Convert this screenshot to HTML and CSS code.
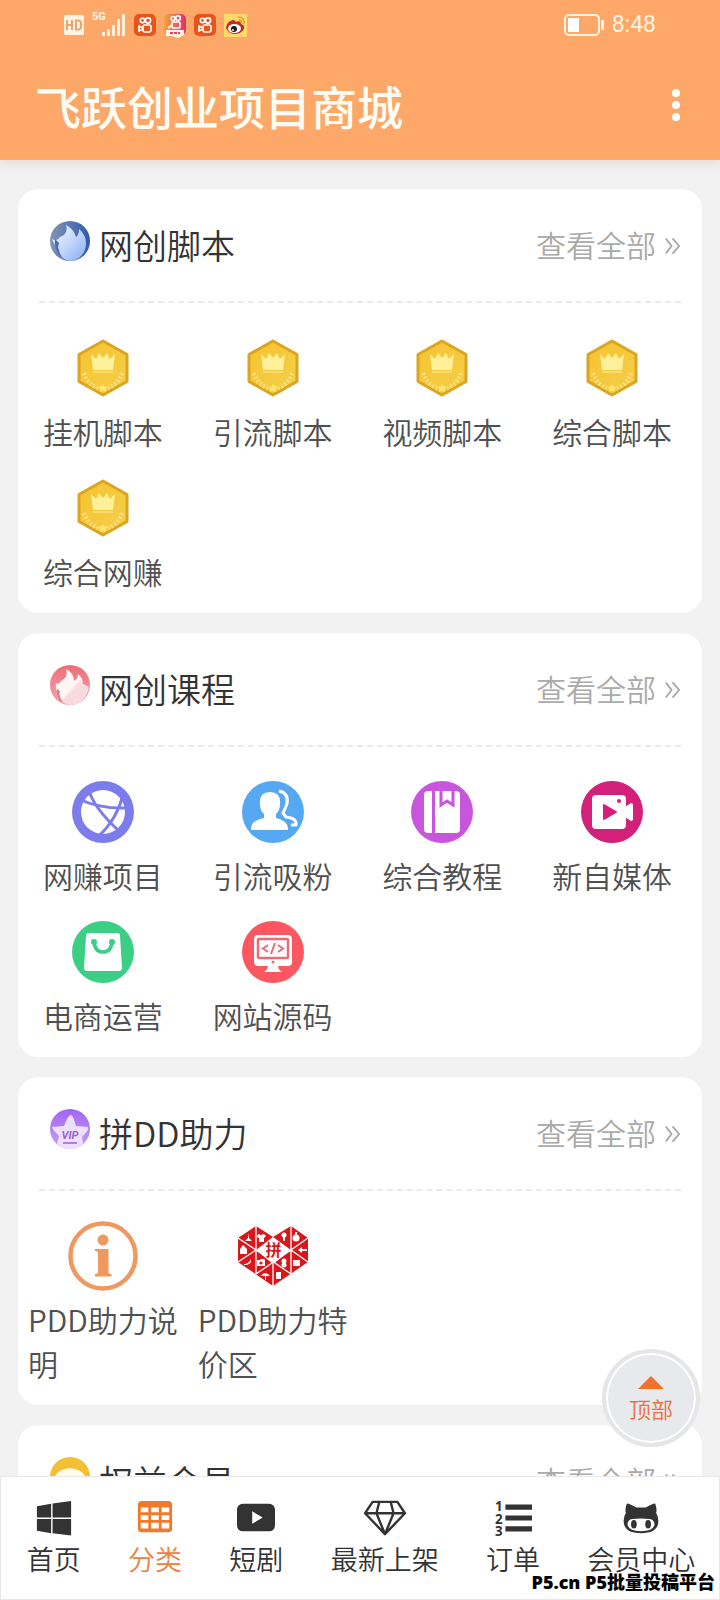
FILE: index.html
```html
<!DOCTYPE html>
<html lang="zh-CN">
<head>
<meta charset="utf-8">
<meta name="viewport" content="width=device-width, initial-scale=1">
<title>飞跃创业项目商城</title>
<link rel="stylesheet" href="styles.css">
</head>
<body>
<svg class="defs" aria-hidden="true">
  <defs>
    <linearGradient id="gold" x1="0" y1="0" x2="1" y2="1"><stop offset="0" stop-color="#f7c331"/><stop offset="1" stop-color="#f3cf4a"/></linearGradient>
    <linearGradient id="blue" x1="0" y1="0" x2="1" y2="0"><stop offset="0" stop-color="#8493b8"/><stop offset="1" stop-color="#2f5aa8"/></linearGradient>
    <linearGradient id="ice" x1="0" y1="0" x2="1" y2="1"><stop offset="0" stop-color="#f4f8ff"/><stop offset=".5" stop-color="#c3d7fb"/><stop offset="1" stop-color="#86adf4"/></linearGradient>
    <linearGradient id="rose" x1="0" y1="0" x2="0" y2="1"><stop offset="0" stop-color="#ee6d78"/><stop offset="1" stop-color="#f4a7ae"/></linearGradient>
    <linearGradient id="blush" x1="0" y1="0" x2="1" y2="1"><stop offset=".5" stop-color="#fff6f6"/><stop offset=".55" stop-color="#f7dbde"/></linearGradient>
    <linearGradient id="violet" x1="0" y1="0" x2="0" y2="1"><stop offset="0" stop-color="#a264f2"/><stop offset="1" stop-color="#c4a4f2"/></linearGradient>
    <linearGradient id="app" x1="0" y1="0" x2="1" y2="0"><stop offset="0" stop-color="#f5a33c"/><stop offset="1" stop-color="#e22e6b"/></linearGradient>
  </defs>
  <symbol id="coin" viewBox="0 0 70 70">
    <path d="M35 8 59 21.500V48.500L35 62 11 48.500V21.500Z" fill="url(#gold)" stroke="#dba51f" stroke-width="3" stroke-linejoin="round"/>
    <path d="M23 21l5 5 3-6 4 5 4-5 3 6 5-5-2 16H25Z" fill="#fff09a"/>
    <path d="M25 39h20" stroke="#fbe27b" stroke-width="1.500"/>
    <path d="M16 40q4 12 14 15M54 40q-4 12-14 15" fill="none" stroke="#f9df85" stroke-width="4" stroke-dasharray="2 2"/>
    <path d="M35 51l1.500 2.500 3 .5-2 2 .5 3-3-1.500-3 1.500.5-3-2-2 3-.5Z" fill="#ffe878"/>
  </symbol>
  <symbol id="kuai" viewBox="0 0 22 22">
    <rect width="22" height="22" rx="5" fill="#e8541c"/>
    <g fill="none" stroke="#fff" stroke-width="1.600"><circle cx="8.500" cy="6.500" r="2.200"/><circle cx="14" cy="6.500" r="2.600"/><rect x="9" y="11" width="8" height="7" rx="2"/><path d="M9 14l-4-2v5l4-2"/></g>
  </symbol>
  <symbol id="more" viewBox="0 0 18 18"><path d="M2 1l6 8-6 8M9 1l7 8-7 8" fill="none" stroke="currentColor" stroke-width="2"/></symbol>
</svg>

<header class="top">
  <div class="status">
    <svg width="20" height="20" viewBox="0 0 20 20" aria-hidden="true"><rect width="20" height="20" rx="2" fill="#fff4e2"/><path d="M3 5v10M3 10h5M8 5v10M12 5.500v9h2q3 0 3-3v-3q0-3-3-3Z" fill="none" stroke="#eda56e" stroke-width="2"/></svg>
    <span class="net">5G</span>
    <svg class="signal" width="24" height="22" viewBox="0 0 24 22" aria-hidden="true"><path d="M1.500 22v-4M6.500 22v-6.500M11.500 22v-11M16.500 22V5M21.500 22V0" stroke="#fff0dc" stroke-width="3"/></svg>
    <svg width="22" height="22" aria-hidden="true"><use href="#kuai"/></svg>
    <svg width="22" height="26" viewBox="0 0 22 26" aria-hidden="true"><rect y="2" width="22" height="21" rx="5" fill="url(#app)"/><g fill="none" stroke="#fff" stroke-width="1.600"><circle cx="9" cy="6.500" r="2"/><circle cx="14" cy="6" r="2.300"/><rect x="8" y="10" width="8" height="6" rx="1"/><path d="M8 13l-4 3"/></g><path d="M2 18h18v5l-6 3-6-2-6 0Z" fill="#fff4e8"/><path d="M6 21h10" stroke="#d6475b" stroke-width="2" stroke-dasharray="3 1"/></svg>
    <svg width="22" height="22" aria-hidden="true"><use href="#kuai"/></svg>
    <svg width="23" height="23" viewBox="0 0 23 23" aria-hidden="true"><rect width="23" height="23" fill="#fcd968"/><path d="M2 14q1-7 7-8 3 0 2 2 6-2 6 2 4 1 3 5-3 5-9 5t-9-6Z" fill="#c22a25"/><ellipse cx="10.500" cy="14.500" rx="6.500" ry="4.500" fill="#fff"/><circle cx="10" cy="15" r="3" fill="#20171a"/><circle cx="9" cy="16" r="1" fill="#fff"/><path d="M14 3q7 0 6 7M15 6q3 0 2.500 3" fill="none" stroke="#ec9c2c" stroke-width="1.500"/></svg>
    <svg class="battery" width="40" height="22" viewBox="0 0 40 22" aria-hidden="true"><rect x="1" y="1" width="34" height="20" rx="4" fill="none" stroke="#fff4e2" stroke-width="2"/><rect x="4" y="4" width="11" height="14" fill="#fff"/><path d="M38.500 6v10" stroke="#fff4e2" stroke-width="3"/></svg>
    <time class="time">8:48</time>
  </div>
  <div class="titlebar">
    <h1>飞跃创业项目商城</h1>
    <button class="menu" aria-label="更多"><svg width="8" height="32" viewBox="0 0 8 32"><g fill="#fff"><circle cx="4" cy="4" r="4"/><circle cx="4" cy="16" r="4"/><circle cx="4" cy="28" r="4"/></g></svg></button>
  </div>
</header>

<main class="content">
  <section class="card">
    <div class="card-head">
      <svg class="badge" viewBox="0 0 40 40" aria-hidden="true"><circle cx="20" cy="20" r="20" fill="url(#blue)"/><path d="M14 14q4-4 2-10 8 4 10 12 3-2 3-8 7 6 7 14Q36 36 22 40 10 40 9 28q-4-2-7-10 5 3 8-2 2-1 4-2Z" fill="url(#ice)"/><path d="M5 18q-1 8 4 16l3 2q-6-7-3-14Z" fill="#4a6da8"/></svg>
      <h2>网创脚本</h2>
      <a class="all" href="#">查看全部<svg aria-hidden="true"><use href="#more"/></svg></a>
    </div>
    <div class="grid">
      <a class="cell" href="#"><svg aria-hidden="true"><use href="#coin"/></svg><span>挂机脚本</span></a>
      <a class="cell" href="#"><svg aria-hidden="true"><use href="#coin"/></svg><span>引流脚本</span></a>
      <a class="cell" href="#"><svg aria-hidden="true"><use href="#coin"/></svg><span>视频脚本</span></a>
      <a class="cell" href="#"><svg aria-hidden="true"><use href="#coin"/></svg><span>综合脚本</span></a>
      <a class="cell" href="#"><svg aria-hidden="true"><use href="#coin"/></svg><span>综合网赚</span></a>
    </div>
  </section>

  <section class="card">
    <div class="card-head">
      <svg class="badge" viewBox="0 0 40 40" aria-hidden="true"><circle cx="20" cy="20" r="20" fill="url(#rose)"/><path d="M14 14q4-4 2-10 8 4 8 12 4-2 4-7 5 4 5 10 3 1 6 3Q36 38 22 40 10 40 9 28q-4-2-3-10 3 2 5-2Z" fill="url(#blush)"/><path d="M7 24q-1 6 3 12l3 1q-5-6-3-11Z" fill="#dc7f8a"/></svg>
      <h2>网创课程</h2>
      <a class="all" href="#">查看全部<svg aria-hidden="true"><use href="#more"/></svg></a>
    </div>
    <div class="grid">
      <a class="cell" href="#"><svg viewBox="0 0 70 70" aria-hidden="true"><circle cx="35" cy="35" r="31" fill="#7d7cec"/><circle cx="35" cy="35" r="22" fill="#fff"/><path d="M21 13q4 17 30 41M55 18Q49 42 30 60M11 22q20 10 49 9" fill="none" stroke="#7d7cec" stroke-width="3"/></svg><span>网赚项目</span></a>
      <a class="cell" href="#"><svg viewBox="0 0 70 70" aria-hidden="true"><circle cx="35" cy="35" r="31" fill="#57a8f3"/><path d="M32 15q11 0 10 12 0 7-4 10v4q13 3 12 12H13q-1-9 13-12v-4q-4-3-4-10-1-12 10-12Z" fill="#fff"/><path d="M41 14q10 2 8 13-2 5-4 9l3 4q11 1 10 8h-5" fill="none" stroke="#fff" stroke-width="3" stroke-linejoin="round"/></svg><span>引流吸粉</span></a>
      <a class="cell" href="#"><svg viewBox="0 0 70 70" aria-hidden="true"><circle cx="35" cy="35" r="31" fill="#c755dd"/><rect x="17" y="14" width="36" height="42" rx="4" fill="#fff"/><path d="M26.500 14v42" stroke="#c755dd" stroke-width="3"/><path d="M34 13v15l6-4 6 4V13" fill="none" stroke="#c755dd" stroke-width="3"/></svg><span>综合教程</span></a>
      <a class="cell" href="#"><svg viewBox="0 0 70 70" aria-hidden="true"><circle cx="35" cy="35" r="31" fill="#d2207b"/><rect x="15" y="18" width="34" height="34" rx="4" fill="#fff"/><path d="M48 30l6-4q2 0 2 2v14q0 2-2 2l-6-4Z" fill="#fff"/><path d="M27 28v14l12-7Z" fill="#d2207b" stroke="#d2207b" stroke-width="2" stroke-linejoin="round"/><circle cx="42" cy="24" r="2" fill="#d2207b"/></svg><span>新自媒体</span></a>
      <a class="cell" href="#"><svg viewBox="0 0 70 70" aria-hidden="true"><circle cx="35" cy="35" r="31" fill="#3dce86"/><path d="M21 16h28q3 0 3 3l2 32q0 3-3 3H19q-3 0-3-3l2-32q0-3 3-3Z" fill="#fff"/><path d="M26 25q1 10 9 10t9-10" fill="none" stroke="#3dce86" stroke-width="3.500"/><circle cx="26" cy="25" r="3" fill="#3dce86"/><circle cx="44" cy="25" r="3" fill="#3dce86"/></svg><span>电商运营</span></a>
      <a class="cell" href="#"><svg viewBox="0 0 70 70" aria-hidden="true"><circle cx="35" cy="35" r="31" fill="#fa5761"/><rect x="16" y="18" width="38" height="31" rx="4" fill="#fff"/><path d="M30 48h10q0 5 4 7H26q4-2 4-7Z" fill="#fff"/><rect x="20" y="22" width="30" height="19" rx="1" fill="none" stroke="#ef6a73" stroke-width="2.500"/><path d="M30 28l-5 3.500 5 3.500M40 28l5 3.500-5 3.500M37 26l-4 11" fill="none" stroke="#ef6a73" stroke-width="2"/><circle cx="35" cy="45" r="1.500" fill="#ef6a73"/></svg><span>网站源码</span></a>
    </div>
  </section>

  <section class="card">
    <div class="card-head">
      <svg class="badge" viewBox="0 0 40 40" aria-hidden="true"><circle cx="20" cy="20" r="20" fill="url(#violet)"/><path d="M21 6q2 0 5 11l12 1q2 2-6 10l1 7q-5 5-13 5t-13-5l2-8q-8-8-7-9l12-1q4-11 7-11Z" fill="#efdfff"/><path d="M13 34h14" stroke="#9a62cf" stroke-width="1.500"/><text x="20" y="30" class="vip">VIP</text></svg>
      <h2>拼DD助力</h2>
      <a class="all" href="#">查看全部<svg aria-hidden="true"><use href="#more"/></svg></a>
    </div>
    <div class="grid">
      <a class="cell" href="#"><svg viewBox="0 0 70 70" aria-hidden="true"><circle cx="35" cy="35" r="32.500" fill="none" stroke="#ef985f" stroke-width="4.500"/><circle cx="35" cy="19" r="5.500" fill="#ef985f"/><path d="M27 28h13.500v23q0 2 3 2v2.500H27V53q3 0 3-2V32q0-2-3-2Z" fill="#ef985f"/></svg><span>PDD助力说明</span></a>
      <a class="cell" href="#"><svg viewBox="0 0 70 70" aria-hidden="true">
        <path d="M18 5 35 16 53 5 70 17V41L35 65 0 41V17Z" fill="#d8161c"/>
        <path d="M18 5v48M53 5v48M0 17l18 12L0 41M70 17 53 29l17 12M18 29l35 24M53 29 18 53M35 43v22" fill="none" stroke="#fff" stroke-width="1.300"/>
        <path d="M35 16 53 29 35 43 18 29Z" fill="#fff"/>
        <g fill="#fff"><path d="M11 12v5l3 3H7l3-3Z"/><path d="M20 13l3 1 3-1 2 2-2 2v4h-5v-4l-2-1Z"/><circle cx="46" cy="14" r="2.500"/><path d="M45 16h2v4h-2Z"/><circle cx="58" cy="17" r="3.500"/><path d="M57 11h2v3h-2Z"/><path d="M2 28l3-4 4 4v5H2Z"/><path d="M60 29l4-3v2h5v2h-5v2Z"/><path d="M6 43q5 0 7-5 1 6-7 6Z"/><path d="M19 39h3l1-1h3l1 1v6h-8Z"/><circle cx="46" cy="40" r="2.500"/><circle cx="46" cy="44" r="2.500"/><path d="M55 39h7v6h-7Z"/><path d="M23 55q4-6 9 0Z"/><path d="M27 54h1v5h-1Z"/><path d="M38 51h5v7h-5Z"/></g>
        <circle cx="23" cy="42" r="1.600" fill="#d8161c"/><text x="35.500" y="35" class="pin">拼</text></svg><span>PDD助力特价区</span></a>
    </div>
  </section>

  <section class="card">
    <div class="card-head">
      <svg class="badge" viewBox="0 0 40 40" aria-hidden="true"><circle cx="20" cy="20" r="20" fill="#f3bf35"/><path d="M5 19q4-7 15-8 11 1 15 8-4 17-15 19Q9 36 5 19Z" fill="#fffbe8"/></svg>
      <h2>权益会员</h2>
      <a class="all" href="#">查看全部<svg aria-hidden="true"><use href="#more"/></svg></a>
    </div>
  </section>
</main>

<button class="to-top"><svg width="26" height="13" viewBox="0 0 26 13" aria-hidden="true"><path d="M13 0 26 13H0Z" fill="#f0722c"/></svg><span>顶部</span></button>

<nav class="tabs">
  <a href="#"><svg viewBox="0 0 40 40" aria-hidden="true"><path d="M2 7.500 17 5v14.500H2ZM18.500 4.700 38 2v17.500H18.500ZM2 21h15V36L2 33.500ZM18.500 21H38V38.500l-19.500-2.500Z" fill="#333"/></svg><span>首页</span></a>
  <a href="#" class="on" aria-current="page"><svg viewBox="0 0 40 40" aria-hidden="true"><rect x="2" y="2" width="36" height="33" rx="4" fill="#f07a2c"/><path d="M5 9h8v5H5ZM16 9h8v5h-8ZM27 9h8v5h-8ZM5 17h8v5H5ZM16 17h8v5h-8ZM27 17h8v5h-8ZM5 25h8v6H5ZM16 25h8v6h-8ZM27 25h8v6h-8Z" fill="#fff"/></svg><span>分类</span></a>
  <a href="#"><svg viewBox="0 0 40 40" aria-hidden="true"><rect x="0" y="5" width="40" height="29" rx="6" fill="#333"/><path d="M16 13v13l11-6.500Z" fill="#fff"/></svg><span>短剧</span></a>
  <a href="#"><svg class="wide" viewBox="0 0 46 40" aria-hidden="true"><path d="M10 3h26l8 12-21 22L2 15ZM2 15h42M17 3l-3 12 9 22 9-22-3-12" fill="none" stroke="#333" stroke-width="2.500" stroke-linejoin="round"/></svg><span>最新上架</span></a>
  <a href="#"><svg viewBox="0 0 40 40" aria-hidden="true"><path d="M12 8.500h28M12 20h28M12 31.500h28" stroke="#333" stroke-width="5.500"/><g class="num"><text x="5" y="13">1</text><text x="5" y="26">2</text><text x="5" y="39">3</text></g></svg><span>订单</span></a>
  <a href="#"><svg viewBox="0 0 40 40" aria-hidden="true"><path d="M5 5q1-1 10 4h10q9-5 10-4 2 5 1 10 3 4 2 11-2 10-18 10T2 26q-1-7 2-11-1-5 1-10Z" fill="#333"/><path d="M11 21q9-1 18 0 6 1 5 7-2 6-14 6T6 28q-1-6 5-7Z" fill="#fff"/><ellipse cx="12.500" cy="26.500" rx="3" ry="4.500" fill="#333"/><ellipse cx="27.500" cy="26.500" rx="3" ry="4.500" fill="#333"/></svg><span>会员中心</span></a>
</nav>
<p class="mark">P5.cn P5批量投稿平台</p>
</body>
</html>
```
FILE: styles.css
```css
* { box-sizing: border-box; }
html, body { height: 100%; }
body {
  margin: 0;
  position: relative;
  display: flex;
  flex-direction: column;
  overflow: hidden;
  background: #f2f2f2;
  color: #333;
  font-family: "Noto Sans CJK SC", sans-serif;
  font-weight: 350;
}
a { color: inherit; text-decoration: none; }
button { padding: 0; border: 0; background: none; font: inherit; cursor: pointer; }
h1, h2, p { margin: 0; }
svg { display: block; flex: none; }
.defs { position: absolute; width: 0; height: 0; }

.top {
  flex: none;
  z-index: 1;
  background: #fda768;
  box-shadow: 0 2px 12px #e8d3c4;
}
.status {
  display: flex;
  align-items: center;
  gap: 8px;
  height: 50px;
  padding: 0 64px;
  color: #fff4e2;
}
.net { align-self: flex-start; padding-top: 10px; font: 700 11px/14px Roboto, sans-serif; }
.signal { margin-left: -12px; }
.battery { margin-left: auto; }
.time { font: 400 23px/24px Roboto, sans-serif; }
.titlebar {
  display: flex;
  align-items: center;
  justify-content: space-between;
  height: 110px;
  padding: 0 40px 0 35px;
}
h1 { color: #fffdf6; font-size: 46px; font-weight: 500; line-height: 68px; }

.content {
  flex: 1;
  min-height: 0;
  overflow: auto;
  scrollbar-width: none;
  display: flex;
  flex-direction: column;
  gap: 20px;
  padding: 29px 18px 0;
}
.card { flex: none; border-radius: 20px; background: #fff; }
.card-head {
  display: flex;
  align-items: center;
  height: 114px;
  margin: 0 21px;
  border-bottom: 2px dashed #ebebeb;
}
.badge { width: 40px; height: 40px; margin: 0 9px 8px 11px; }
h2 { font-size: 34px; font-weight: 350; line-height: 48px; }
.all { display: flex; align-items: center; gap: 8px; margin-left: auto; padding-bottom: 2px; color: #aaa; font-size: 30px; line-height: 44px; }
.all svg { width: 17px; height: 18px; margin-top: 4px; }
.grid { display: grid; grid-template-columns: repeat(4, 1fr); padding: 30px 5px 0 0; }
.cell {
  display: flex;
  flex-direction: column;
  align-items: center;
  gap: 6px;
  padding: 0 10px 20px;
  color: #505050;
  font-size: 30px;
  line-height: 44px;
}
.cell svg { width: 70px; height: 70px; }
.vip { fill: #9a62cf; font: italic 700 11px Roboto, sans-serif; text-anchor: middle; }
.pin { fill: #d8161c; font-size: 16px; font-weight: 700; text-anchor: middle; }

.to-top {
  position: absolute;
  right: 20px;
  bottom: 153px;
  z-index: 2;
  display: flex;
  flex-direction: column;
  align-items: center;
  gap: 4px;
  width: 98px;
  height: 98px;
  padding-top: 23px;
  border: 4px solid #e6e6e8;
  border-radius: 50%;
  background: #e8e9ed;
  box-shadow: inset 0 0 0 2px #fff;
  color: #e8703a;
  font-size: 22px;
  line-height: 30px;
}

.tabs {
  flex: none;
  display: flex;
  justify-content: space-around;
  height: 124px;
  padding: 22px 0 0 2px;
  border: 1px solid #e8e8e8;
  background: #fff;
}
.tabs a { display: flex; flex-direction: column; align-items: center; gap: 2px; font-size: 27px; line-height: 40px; }
.tabs svg { width: 38px; height: 38px; }
.tabs .wide { width: 44px; }
.tabs .on { color: #ee8040; }
.num { fill: #333; font: 700 14px "Noto Sans", sans-serif; text-anchor: middle; }
.mark {
  position: absolute;
  right: 5px;
  bottom: 6px;
  color: #000;
  font: 900 18px/24px "Open Sans", "Noto Sans CJK SC", sans-serif;
}
```
